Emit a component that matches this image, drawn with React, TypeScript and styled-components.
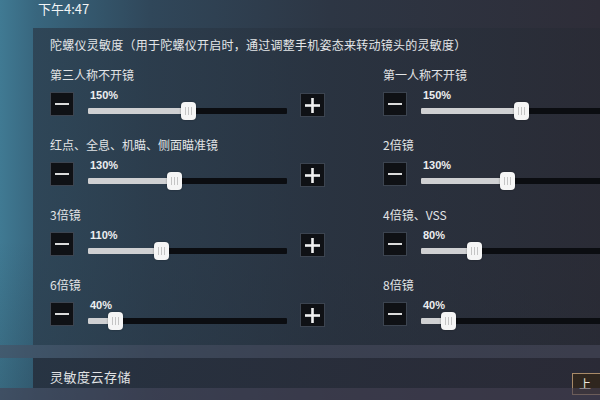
import React from "react";
import styled, { createGlobalStyle } from "styled-components";

const GlobalStyle = createGlobalStyle`
	html, body {
		margin: 0;
		padding: 0;
		background: #2a2d36;
	}
	body {
		font-family: "Noto Sans CJK SC", "Noto Sans", sans-serif;
	}
`;

interface Setting {
	label: string;
	value: number;
}

const MAX = 300;

const leftSettings: Setting[] = [
	{ label: "第三人称不开镜", value: 150 },
	{ label: "红点、全息、机瞄、侧面瞄准镜", value: 130 },
	{ label: "3倍镜", value: 110 },
	{ label: "6倍镜", value: 40 }
];

const rightSettings: Setting[] = [
	{ label: "第一人称不开镜", value: 150 },
	{ label: "2倍镜", value: 130 },
	{ label: "4倍镜、VSS", value: 80 },
	{ label: "8倍镜", value: 40 }
];

const Screen = styled.div`
	width: 600px;
	height: 400px;
	overflow: hidden;
	display: flex;
	flex-direction: column;
	background:
		linear-gradient(180deg, rgba(0, 0, 0, 0) 60%, rgba(20, 30, 40, 0.2) 100%),
		linear-gradient(90deg, #407a93 0%, #38667e 6%, #30475a 25%, #2d3644 55%, #2e2d38 100%);
	color: #e6e8ea;
`;

const StatusBar = styled.div`
	height: 28px;
	flex-shrink: 0;
	padding-left: 38px;
	font-size: 13px;
	line-height: 18px;
	color: #f2f4f5;
	font-family: "Noto Sans CJK SC", sans-serif;
`;

const Panel = styled.div`
	width: 620px;
	height: 317px;
	margin-left: 33px;
	box-sizing: border-box;
	padding: 9px 0 0 17px;
	flex-shrink: 0;
	background: linear-gradient(90deg, rgba(44, 62, 78, 0.8) 0%, rgba(40, 50, 63, 0.7) 45%, rgba(40, 41, 50, 0.65) 100%);
`;

const Title = styled.div`
	font-size: 12px;
	line-height: 16px;
	letter-spacing: 0.25px;
	color: #e4e6e8;
	white-space: nowrap;
	margin-bottom: 15px;
`;

const Columns = styled.div`
	display: grid;
	grid-template-columns: 275px 275px;
	column-gap: 58px;
`;

const Column = styled.div`
	display: flex;
	flex-direction: column;
	gap: 22px;
`;

const Item = styled.div`
	display: flex;
	flex-direction: column;
	gap: 10px;
`;

const Label = styled.div`
	font-size: 12px;
	line-height: 14px;
	color: #e2e4e6;
	white-space: nowrap;
`;

const Controls = styled.div`
	display: flex;
	align-items: flex-start;
	height: 24px;
`;

const StepButton = styled.div<{ $kind: "minus" | "plus" }>`
	width: ${(p) => (p.$kind === "plus" ? 25 : 24)}px;
	height: 24px;
	flex-shrink: 0;
	box-sizing: border-box;
	background: #0f1115;
	border: 1px solid #3c4450;
	display: flex;
	align-items: center;
	justify-content: center;
	margin-left: ${(p) => (p.$kind === "plus" ? 13 : 0)}px;
	margin-top: ${(p) => (p.$kind === "plus" ? 1 : 0)}px;
`;

const SliderWrap = styled.div`
	width: 199px;
	margin-left: 14px;
	margin-top: -3px;
	display: flex;
	flex-direction: column;
`;

const Percent = styled.div`
	font-family: "Liberation Sans", Arial, sans-serif;
	font-weight: bold;
	font-size: 11px;
	line-height: 12px;
	padding-left: 2px;
	color: #eceef0;
`;

const Track = styled.div`
	position: relative;
	height: 6px;
	margin-top: 7px;
	background: #0b0d11;
	border-radius: 1px;
`;

const Fill = styled.div`
	position: absolute;
	left: 0;
	top: 0;
	bottom: 0;
	background: #cfd0d2;
	border-radius: 1px 0 0 1px;
`;

const Thumb = styled.div`
	position: absolute;
	top: -6px;
	width: 15px;
	height: 18px;
	margin-left: -7px;
	background: #f5f5f5;
	border-radius: 4px;
	display: flex;
	align-items: center;
	justify-content: center;
	gap: 2px;
	box-shadow: 0 0 2px rgba(0, 0, 0, 0.4);
`;

const Grip = styled.span`
	width: 1px;
	height: 8px;
	background: #c4c4c4;
`;

const CloudGap = styled.div`
	height: 13px;
	flex-shrink: 0;
	background: rgba(72, 76, 94, 0.55);
`;

const CloudPanel = styled.div`
	height: 30px;
	flex-shrink: 0;
	margin-left: 33px;
	padding-left: 17px;
	display: flex;
	align-items: center;
	justify-content: space-between;
	background: linear-gradient(90deg, rgba(38, 48, 62, 0.9) 0%, rgba(42, 42, 54, 0.9) 100%);
`;

const CloudTitle = styled.div`
	font-size: 13px;
	line-height: 16px;
	letter-spacing: 0.5px;
	margin-top: 8px;
	color: #e0e2e4;
`;

const UploadButton = styled.div`
	width: 40px;
	height: 22px;
	margin-top: 22px;
	margin-right: -12px;
	box-sizing: border-box;
	border: 1px solid #a88a68;
	background: #2f261e;
	color: #f0e8dc;
	font-size: 12px;
	line-height: 20px;
	padding-left: 6px;
`;

const Bottom = styled.div`
	flex: 1;
	background: rgba(68, 64, 82, 0.6);
`;

const MinusIcon = () => (
	<svg width="14" height="14" viewBox="0 0 14 14">
		<rect x="0" y="6" width="14" height="2" fill="#dcdcdc" />
	</svg>
);

const PlusIcon = () => (
	<svg width="15" height="15" viewBox="0 0 15 15">
		<rect x="0" y="6.2" width="15" height="2.6" fill="#f0f0f0" />
		<rect x="6.2" y="0" width="2.6" height="15" fill="#f0f0f0" />
	</svg>
);

const SettingRow = ({ label, value }: Setting) => {
	const pct = (value / MAX) * 100;
	return (
		<Item>
			<Label>{label}</Label>
			<Controls>
				<StepButton $kind="minus">
					<MinusIcon />
				</StepButton>
				<SliderWrap>
					<Percent>{value}%</Percent>
					<Track>
						<Fill style={{ width: `${pct}%` }} />
						<Thumb style={{ left: `${pct}%` }}>
							<Grip />
							<Grip />
							<Grip />
						</Thumb>
					</Track>
				</SliderWrap>
				<StepButton $kind="plus">
					<PlusIcon />
				</StepButton>
			</Controls>
		</Item>
	);
};

export default function App() {
	return (
		<>
			<GlobalStyle />
			<Screen>
				<StatusBar>下午4:47</StatusBar>
				<Panel>
					<Title>陀螺仪灵敏度（用于陀螺仪开启时，通过调整手机姿态来转动镜头的灵敏度）</Title>
					<Columns>
						<Column>
							{leftSettings.map((s) => (
								<SettingRow key={s.label} {...s} />
							))}
						</Column>
						<Column>
							{rightSettings.map((s) => (
								<SettingRow key={s.label} {...s} />
							))}
						</Column>
					</Columns>
				</Panel>
				<CloudGap />
				<CloudPanel>
					<CloudTitle>灵敏度云存储</CloudTitle>
					<UploadButton>上</UploadButton>
				</CloudPanel>
				<Bottom />
			</Screen>
		</>
	);
}
